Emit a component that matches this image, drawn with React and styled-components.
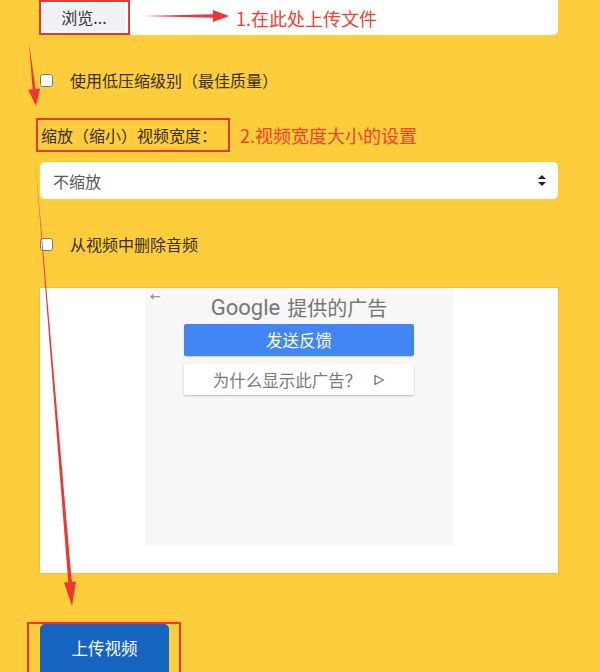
import styled, { createGlobalStyle } from "styled-components"

const GlobalStyle = createGlobalStyle`
  html, body {
    margin: 0;
    padding: 0;
    background: #fecd3b;
  }
  body {
    font-family: "Noto Sans CJK SC", "Noto Sans", sans-serif;
  }
`

const Page = styled.div`
  position: relative;
  width: 600px;
  height: 672px;
  overflow: hidden;
  background: #fecd3b;
  padding: 0 42px 0 40px;
  box-sizing: border-box;
`

const FileRow = styled.div`
  display: flex;
  align-items: center;
  height: 35px;
  background: #fff;
  border-radius: 0 0 5px 5px;
`
const BrowseFrame = styled.div`
  box-sizing: border-box;
  margin-left: -1px;
  width: 91px;
  height: 35px;
  border: 2px solid #ee3535;
  padding: 1px 2px 2px 1px;
  background: #fff;
`
const BrowseButton = styled.div`
  display: flex;
  align-items: center;
  justify-content: center;
  height: 100%;
  background: #eff1f4;
  color: #333;
  font-size: 16px;
`
const Note = styled.span`
  color: #f2402e;
  font-size: 18px;
  margin-left: ${p => p.$gap || 0}px;
  white-space: nowrap;
`

const Option = styled.label`
  display: flex;
  align-items: center;
  height: 22px;
  margin-top: ${p => p.$top}px;
  color: #35301c;
  font-size: 16px;
`
const Check = styled.input`
  width: 13px;
  height: 13px;
  margin: 0 17px 0 0;
  accent-color: #fff;
`

const FieldRow = styled.div`
  display: flex;
  align-items: center;
  margin-top: 27px;
`
const MarkedLabel = styled.div`
  box-sizing: border-box;
  display: flex;
  align-items: center;
  margin-left: -4px;
  width: 194px;
  height: 34px;
  padding-left: 3px;
  border: 2px solid #ee3535;
  color: #35301c;
  font-size: 16px;
  white-space: nowrap;
`

const Select = styled.div`
  display: flex;
  align-items: center;
  justify-content: space-between;
  margin-top: 10px;
  height: 37px;
  padding: 0 12px 0 13px;
  background: #fff;
  border-radius: 5px;
  color: #555b61;
  font-size: 16px;
`

const AdBox = styled.div`
  margin-top: 33px;
  height: 285px;
  background: #fff;
  box-shadow: 0 0 0 1px rgba(0, 0, 0, 0.06);
`
const AdInner = styled.div`
  position: relative;
  display: flex;
  flex-direction: column;
  align-items: center;
  margin-left: 105px;
  width: 308px;
  height: 258px;
  background: #f7f7f7;
`
const AdBack = styled.span`
  position: absolute;
  left: 5px;
  top: 1px;
  color: #888;
  font-size: 13px;
  font-family: "DejaVu Sans", sans-serif;
`
const AdTitle = styled.div`
  margin-top: 2px;
  height: 34px;
  display: flex;
  align-items: center;
  gap: 7px;
  color: #767676;
  font-size: 20px;
  & b {
    font-family: Roboto, "Open Sans", sans-serif;
    font-weight: 400;
    font-size: 22px;
  }
`
const AdButton = styled.div`
  display: flex;
  align-items: center;
  justify-content: center;
  gap: 12px;
  box-sizing: border-box;
  width: 230px;
  height: ${p => (p.$primary ? 32 : 31)}px;
  margin-top: ${p => (p.$primary ? 0 : 8)}px;
  border-radius: 2px;
  background: ${p => (p.$primary ? "#4285f4" : "#fff")};
  color: ${p => (p.$primary ? "#fff" : "#7a7a7a")};
  box-shadow: ${p => (p.$primary ? "0 1px 1px rgba(0,0,0,0.15)" : "0 1px 2px rgba(0,0,0,0.25)")};
  font-size: 16.5px;
`

const UploadFrame = styled.div`
  margin-top: 49px;
  margin-left: -13px;
  width: 154px;
  height: 60px;
  box-sizing: border-box;
  border: 2px solid #ee3535;
  padding: 0 10px 0 11px;
`
const UploadButton = styled.div`
  display: flex;
  align-items: center;
  justify-content: center;
  height: 52px;
  padding-bottom: 4px;
  box-sizing: border-box;
  background: #1565c0;
  border-radius: 5px;
  color: #fff;
  font-size: 16.5px;
`

const Overlay = styled.svg`
  position: absolute;
  left: 0;
  top: 0;
  pointer-events: none;
`

function Arrow({ x1, y1, x2, y2, head = 14, wide = 5, w = 2 }) {
  const dx = x2 - x1
  const dy = y2 - y1
  const len = Math.hypot(dx, dy)
  const ux = dx / len
  const uy = dy / len
  const bx = x2 - ux * head
  const by = y2 - uy * head
  const px = -uy
  const py = ux
  return (
    <g fill="#ee3535" stroke="none">
      <polygon points={`${x1},${y1} ${bx + px * w},${by + py * w} ${bx - px * w},${by - py * w}`} />
      <polygon points={`${x2},${y2} ${bx + px * wide},${by + py * wide} ${bx - px * wide},${by - py * wide}`} />
    </g>
  )
}

function Caret() {
  return (
    <svg width="8" height="11" viewBox="0 0 8 11">
      <path d="M4 0 L8 4 H0 Z M4 11 L8 7 H0 Z" fill="#222" />
    </svg>
  )
}

function PlayMark() {
  return (
    <svg width="12" height="12" viewBox="0 0 12 12">
      <path d="M2 1.5 V10.5 L10.5 6 Z" fill="none" stroke="#7a7a7a" strokeWidth="1.4" strokeLinejoin="round" />
    </svg>
  )
}

export default function App() {
  return (
    <Page>
      <GlobalStyle />
      <FileRow>
        <BrowseFrame>
          <BrowseButton>浏览...</BrowseButton>
        </BrowseFrame>
        <Note $gap={106}>1.在此处上传文件</Note>
      </FileRow>

      <Option $top={34}>
        <Check type="checkbox" />
        使用低压缩级别（最佳质量）
      </Option>

      <FieldRow>
        <MarkedLabel>缩放（缩小）视频宽度：</MarkedLabel>
        <Note $gap={10}>2.视频宽度大小的设置</Note>
      </FieldRow>

      <Select>
        <span>不缩放</span>
        <Caret />
      </Select>

      <Option $top={34}>
        <Check type="checkbox" />
        从视频中删除音频
      </Option>

      <AdBox>
        <AdInner>
          <AdBack>←</AdBack>
          <AdTitle>
            <b>Google</b>提供的广告
          </AdTitle>
          <AdButton $primary>发送反馈</AdButton>
          <AdButton>
            <span>为什么显示此广告？</span>
            <PlayMark />
          </AdButton>
        </AdInner>
      </AdBox>

      <UploadFrame>
        <UploadButton>上传视频</UploadButton>
      </UploadFrame>

      <Overlay width="600" height="672" viewBox="0 0 600 672">
        <Arrow x1={143} y1={16} x2={229} y2={16} head={16} wide={6} w={1.8} />
        <Arrow x1={29} y1={43} x2={36} y2={106} head={17} wide={6} w={1.5} />
        <Arrow x1={35} y1={157} x2={72} y2={606} head={24} wide={6} w={1.8} />
      </Overlay>
    </Page>
  )
}
